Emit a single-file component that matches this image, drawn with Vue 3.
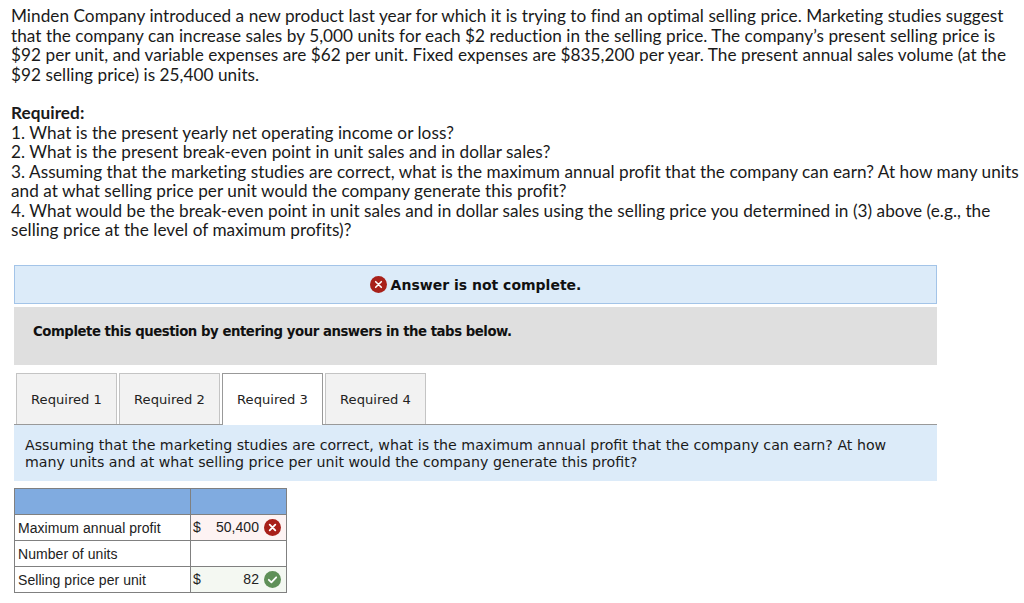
<template>
  <div class="page">
    <div class="problem">
      <p>
        Minden Company introduced a new product last year for which it is trying to find an optimal selling price. Marketing studies suggest<br />
        that the company can increase sales by 5,000 units for each $2 reduction in the selling price. The company’s present selling price is<br />
        $92 per unit, and variable expenses are $62 per unit. Fixed expenses are $835,200 per year. The present annual sales volume (at the<br />
        $92 selling price) is 25,400 units.
      </p>
      <p class="required">
        <strong>Required:</strong><br />
        1. What is the present yearly net operating income or loss?<br />
        2. What is the present break-even point in unit sales and in dollar sales?<br />
        3. Assuming that the marketing studies are correct, what is the maximum annual profit that the company can earn? At how many units<br />
        and at what selling price per unit would the company generate this profit?<br />
        4. What would be the break-even point in unit sales and in dollar sales using the selling price you determined in (3) above (e.g., the<br />
        selling price at the level of maximum profits)?
      </p>
    </div>

    <div class="alert">
      <svg class="icon" width="17" height="17" viewBox="0 0 17 17">
        <circle cx="8.5" cy="8.5" r="8.5" fill="#a8201a" />
        <path d="M5.7 5.7l5.6 5.6M11.3 5.7l-5.6 5.6" stroke="#fff" stroke-width="1.6" stroke-linecap="round" />
      </svg>
      <span>Answer is not complete.</span>
    </div>

    <div class="notice">Complete this question by entering your answers in the tabs below.</div>

    <div class="tabs">
      <div v-for="t in tabs" :key="t" class="tab" :class="{ active: t === activeTab }">{{ t }}</div>
    </div>

    <div class="instruction">
      Assuming that the marketing studies are correct, what is the maximum annual profit that the company can earn? At how<br />
      many units and at what selling price per unit would the company generate this profit?
    </div>

    <table class="answers">
      <thead>
        <tr><th></th><th></th></tr>
      </thead>
      <tbody>
        <tr v-for="row in rows" :key="row.label">
          <td class="label">{{ row.label }}</td>
          <td class="value" :class="row.state">
            <div class="cell">
              <span v-if="row.value">$</span>
              <span class="num">{{ row.value }}</span>
              <svg v-if="row.state === 'wrong'" class="mark" width="17" height="17" viewBox="0 0 17 17">
                <circle cx="8.5" cy="8.5" r="8.5" fill="#a8201a" />
                <path d="M5.7 5.7l5.6 5.6M11.3 5.7l-5.6 5.6" stroke="#fff" stroke-width="1.8" stroke-linecap="round" />
              </svg>
              <svg v-if="row.state === 'right'" class="mark" width="17" height="17" viewBox="0 0 17 17">
                <circle cx="8.5" cy="8.5" r="8.5" fill="#5f9058" />
                <path d="M4.8 8.8l2.6 2.5 4.8-5" fill="none" stroke="#fff" stroke-width="1.8" stroke-linecap="round" stroke-linejoin="round" />
              </svg>
            </div>
          </td>
        </tr>
      </tbody>
    </table>
  </div>
</template>

<script setup>
const tabs = ['Required 1', 'Required 2', 'Required 3', 'Required 4'];
const activeTab = 'Required 3';

const rows = [
  { label: 'Maximum annual profit', value: '50,400', state: 'wrong' },
  { label: 'Number of units', value: '', state: '' },
  { label: 'Selling price per unit', value: '82', state: 'right' }
];
</script>

<style scoped>
.page {
  width: 1024px;
  height: 603px;
  overflow: hidden;
  background: #fff;
  color: #111;
}

.problem {
  padding: 6px 0 0 11px;
  font-family: Lato, sans-serif;
  font-size: 17.2px;
  font-variant-ligatures: none;
  letter-spacing: 0.04px;
  line-height: 19.5px;
  white-space: nowrap;
  color: #1a1a1a;
}

.problem p {
  margin: 0;
}

.problem .required {
  margin-top: 19px;
}

.alert {
  margin: 25px 87px 0 14px;
  height: 39px;
  box-sizing: border-box;
  padding-top: 1px;
  background: #dcebf9;
  border: 1px solid #a3c4e8;
  display: flex;
  align-items: center;
  justify-content: center;
  gap: 4px;
  font-family: "DejaVu Sans", sans-serif;
  font-weight: 700;
  font-size: 14px;
}

.notice {
  margin: 3px 87px 0 14px;
  height: 58px;
  box-sizing: border-box;
  padding: 16px 0 0 19px;
  background: #dfdfdf;
  font-family: "DejaVu Sans", sans-serif;
  font-weight: 700;
  font-size: 13.3px;
  letter-spacing: -0.47px;
  line-height: 18px;
}

.tabs {
  margin: 8px 87px 0 14px;
  padding-left: 2px;
  height: 52px;
  box-sizing: border-box;
  display: flex;
  align-items: flex-start;
  gap: 2px;
  border-bottom: 1px solid #999;
}

.tab {
  width: 101px;
  height: 51px;
  box-sizing: border-box;
  padding-top: 1px;
  background: #f2f2f2;
  border: 1px solid #c4c4c4;
  border-bottom: none;
  display: flex;
  align-items: center;
  justify-content: center;
  font-family: "DejaVu Sans", sans-serif;
  font-size: 13.1px;
  color: #222;
}

.tab.active {
  background: #fff;
  border-color: #999;
  height: 52px;
  padding-bottom: 1px;
  position: relative;
  z-index: 1;
}

.instruction {
  margin: 0 87px 0 14px;
  height: 56px;
  box-sizing: border-box;
  padding: 12px 0 0 11px;
  background: #dcebf9;
  font-family: "DejaVu Sans", sans-serif;
  font-size: 14.2px;
  line-height: 17.5px;
  white-space: nowrap;
  color: #1a1a1a;
}

.answers {
  margin: 7px 0 0 14px;
  width: 273px;
  border-collapse: collapse;
  table-layout: fixed;
  font-family: "Liberation Sans", sans-serif;
  font-size: 14px;
  letter-spacing: 0.05px;
  color: #222;
}

.answers th {
  height: 25px;
  padding: 0;
  background: #80abe0;
  border: 1px solid #808080;
}

.answers th:first-child {
  width: 175px;
}

.answers td {
  height: 25px;
  padding: 0;
  border: 1px solid #808080;
}

.answers .label {
  padding-left: 3px;
  padding-top: 1px;
  height: 24px;
}

.cell {
  display: flex;
  align-items: center;
  height: 25px;
  padding: 0 5px 0 2px;
}

.num {
  flex: 1;
  text-align: right;
  padding-right: 5px;
}

.mark {
  flex: none;
}

.wrong {
  background: #fdf3f3;
}

.right {
  background: #f4f8f2;
}
</style>
